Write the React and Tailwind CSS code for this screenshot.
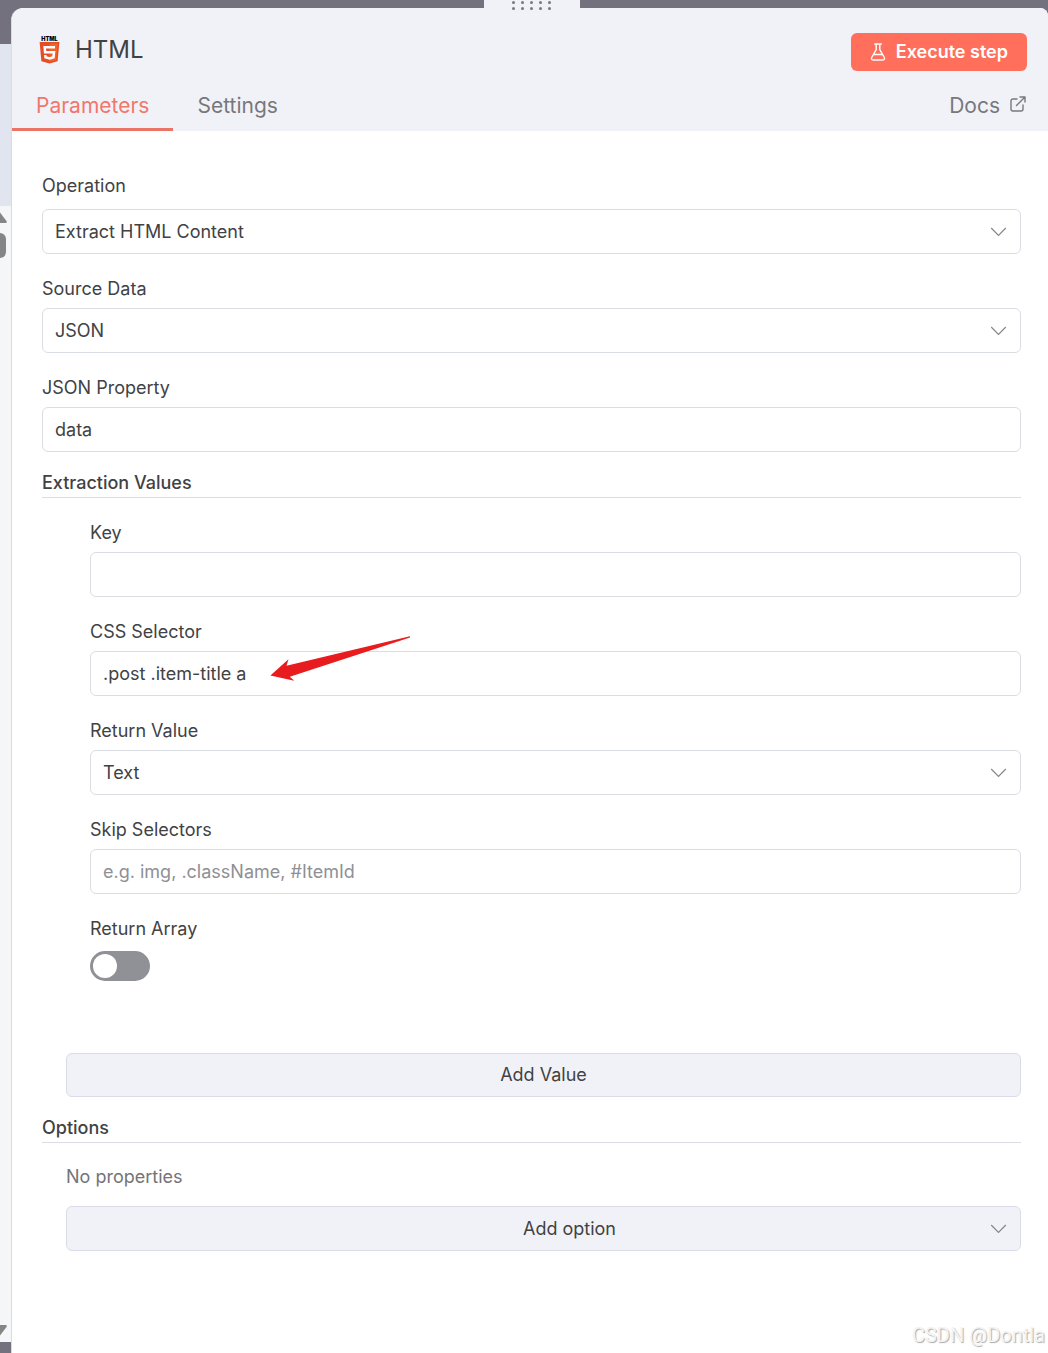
import React, { useId, useState } from 'react';

const inputClass =
  'block w-full h-[45px] rounded-md border border-[#dadde2] bg-white px-3 text-lg text-[#414244] placeholder:text-[#8f9095] outline-none focus:border-[#ff6f5c]';

function Html5Logo() {
  return (
    <svg className="w-[21px] h-7 shrink-0" viewBox="0 0 21 28" aria-hidden="true">
      <text x="10.5" y="4.6" textAnchor="middle" fontFamily="Inter, sans-serif" fontSize="5.6" fontWeight="900" fill="#000">
        HTML
      </text>
      <path d="M0.6 6h19.8l-1.8 19.2-8.1 2.4-8.1-2.4z" fill="#e44d26" />
      <path d="M10.5 7.6h8.2l-1.5 16.5-6.7 1.9z" fill="#f16529" />
      <path d="M16 11.3H5.7l0.4 5h8.9l-0.5 4.9-4 1.2-4-1.2-0.2-2.2" fill="none" stroke="#fff" strokeWidth="2.5" />
    </svg>
  );
}

function FlaskIcon() {
  return (
    <svg className="w-4 h-[18px]" viewBox="0 0 16 18" fill="none" stroke="currentColor" strokeWidth="1.4" strokeLinecap="round" strokeLinejoin="round" aria-hidden="true">
      <path d="M4.7 1h6.6M6.2 1v5.6L1.7 14.5c-0.7 1.3 0 2.5 1.4 2.5h9.8c1.4 0 2.1-1.2 1.4-2.5L9.8 6.6V1M4.3 11.5h7.4" />
    </svg>
  );
}

function ExternalIcon() {
  return (
    <svg className="w-4 h-4" viewBox="0 0 16 16" fill="none" stroke="currentColor" strokeWidth="1.4" strokeLinecap="round" strokeLinejoin="round" aria-hidden="true">
      <path d="M7 3H3a2 2 0 0 0-2 2v8a2 2 0 0 0 2 2h8a2 2 0 0 0 2-2V9M10 1h5v5M15 1L6.5 9.5" />
    </svg>
  );
}

function Chevron() {
  return (
    <svg className="absolute right-3.5 top-[18px] w-4 h-2.5 pointer-events-none" viewBox="0 0 16 10" fill="none" stroke="#85868a" strokeWidth="1.2" aria-hidden="true">
      <path d="M0.2 1L7.5 8.4 14.8 1" />
    </svg>
  );
}

function RedArrow() {
  return (
    <svg className="absolute left-[180px] -top-[15px] w-[141px] h-[46px] pointer-events-none" viewBox="0 0 141 46" aria-hidden="true">
      <path d="M0.4 39.6L18.5 23.3 16.5 29.7 140 0.2V1.4L19.8 40.7 24.3 44.8z" fill="#e81c1e" />
    </svg>
  );
}

function Field({ label, id, children, className = 'mt-[21px] gap-1.5' }) {
  return (
    <div className={`flex flex-col ${className}`}>
      <label htmlFor={id} className="leading-[27px]">{label}</label>
      <div className="relative">{children}</div>
    </div>
  );
}

function TextField({ label, value, placeholder, children }) {
  const id = useId();
  return (
    <Field label={label} id={id}>
      <input id={id} type="text" defaultValue={value} placeholder={placeholder} className={inputClass} />
      {children}
    </Field>
  );
}

function SelectField({ label, options, className }) {
  const id = useId();
  return (
    <Field label={label} id={id} className={className}>
      <select id={id} className={`${inputClass} appearance-none`}>
        {options.map((o) => (
          <option key={o}>{o}</option>
        ))}
      </select>
      <Chevron />
    </Field>
  );
}

function SectionTitle({ children }) {
  return (
    <h2 className="mt-[17px] h-[29px] border-b border-[#dadde2] text-lg leading-[27px] font-medium">{children}</h2>
  );
}

// Slice of the canvas that stays visible beside the panel
function CanvasEdge() {
  return (
    <div className="w-[11px] shrink-0 flex flex-col" aria-hidden="true">
      <div className="h-11" />
      <div className="h-[162px] bg-[#e1e5f0]" />
      <div className="flex-1 flex flex-col bg-[#f5f6f7] pt-1.5">
        <svg className="w-[7px] h-[11px]" viewBox="0 0 7 11">
          <path d="M0 0.5L6.8 9.5Q7 11 5.5 11H0z" fill="#858585" />
        </svg>
        <div className="mt-2.5 w-1.5 h-[25px] rounded-r-md bg-[#858585]" />
        <svg className="mt-auto mb-1.5 w-[7px] h-[11px]" viewBox="0 0 7 11">
          <path d="M0 0h5.5Q7.5 0 6.5 2L0 10.5z" fill="#858585" />
        </svg>
      </div>
      <div className="h-[11px]" />
    </div>
  );
}

function DragHandle() {
  return (
    <div className="absolute -top-2 left-0 right-0 flex justify-center pl-1">
      <div className="w-24 h-4 bg-[#f1f2f8]">
        <svg className="w-24 h-3" viewBox="0 0 96 12" fill="#77787e" aria-hidden="true">
          {[29.5, 38.5, 47.5, 56.5, 65.5].map((x) => (
            <g key={x}>
              <circle cx={x} cy="2.5" r="1.5" />
              <circle cx={x} cy="8.5" r="1.5" />
            </g>
          ))}
        </svg>
      </div>
    </div>
  );
}

function Header() {
  return (
    <header className="bg-[#f1f2f8] rounded-tl-xl rounded-tr-lg">
      <div className="flex items-start justify-between pl-[27px] pr-[21px] pt-[25px]">
        <div className="flex items-center gap-[15px]">
          <Html5Logo />
          <h1 className="text-2xl leading-[34px]">HTML</h1>
        </div>
        <button type="button" className="flex items-center gap-2.5 h-[38px] px-[19px] rounded-md bg-[#ff6f5c] text-lg font-semibold text-white cursor-pointer">
          <FlaskIcon />
          Execute step
        </button>
      </div>
      <nav className="mt-2.5 flex h-[50px] text-[21px] text-[#77787c]">
        <a href="#parameters" className="px-6 pt-2 leading-[33px] border-b-3 border-[#ec7466] text-[#f0776a]">Parameters</a>
        <a href="#settings" className="px-6 pt-2 leading-[33px]">Settings</a>
        <a href="#docs" className="ml-auto mr-[22px] flex gap-2.5 pt-2 leading-[33px]">
          Docs
          <span className="pt-[7px]"><ExternalIcon /></span>
        </a>
      </nav>
    </header>
  );
}

export default function App() {
  const [returnArray, setReturnArray] = useState(false);

  return (
    <div className="min-h-screen flex bg-[#74717e] font-['Inter',sans-serif] text-lg text-[#414244]">
      <CanvasEdge />

      <main className="relative flex-1 min-w-0 mt-2 bg-white border-l border-[#d9dae6] rounded-tl-xl rounded-tr-lg">
        <Header />
        <DragHandle />

        <form className="pt-[41px] pb-24 pl-[30px] pr-[27px]" onSubmit={(e) => e.preventDefault()}>
          <SelectField label="Operation" options={['Extract HTML Content', 'Generate HTML Template', 'Convert to HTML Table']} className="gap-2.5" />
          <SelectField label="Source Data" options={['JSON', 'Binary']} />
          <TextField label="JSON Property" value="data" />

          <SectionTitle>Extraction Values</SectionTitle>
          <div className="pl-12">
            <TextField label="Key" />
            <TextField label="CSS Selector" value=".post .item-title a">
              <RedArrow />
            </TextField>
            <SelectField label="Return Value" options={['Text', 'HTML', 'Attribute', 'Value']} />
            <TextField label="Skip Selectors" placeholder="e.g. img, .className, #ItemId" />
            <div className="mt-[21px]">
              <label htmlFor="return-array" className="block mb-[9px] leading-[27px]">Return Array</label>
              <input
                id="return-array"
                type="checkbox"
                role="switch"
                checked={returnArray}
                onChange={(e) => setReturnArray(e.target.checked)}
                className="block appearance-none w-[60px] h-[30px] p-[3px] rounded-full bg-[#909196] checked:bg-[#ff6f5c] cursor-pointer before:block before:size-6 before:rounded-full before:bg-white checked:before:ml-[30px]"
              />
            </div>
          </div>
          <div className="mt-[72px] pl-6">
            <button type="button" className="block w-full h-11 rounded-md border border-[#d9dce8] bg-[#f1f2f8] cursor-pointer">
              Add Value
            </button>
          </div>

          <SectionTitle>Options</SectionTitle>
          <div className="pl-6">
            <p className="mt-5 leading-[27px] text-[#737478]">No properties</p>
            <div className="relative mt-4">
              <select aria-label="Add option" className="block w-full h-[45px] pl-[52px] rounded-md border border-[#d9dce8] bg-[#f1f2f8] appearance-none [text-align-last:center]">
                <option>Add option</option>
                <option>Trim Values</option>
                <option>Clean Up Text</option>
              </select>
              <Chevron />
            </div>
          </div>
        </form>

        <span className="absolute right-[3px] bottom-1 font-['Roboto',sans-serif] text-xl text-[#f4f4f4] [text-shadow:1px_1px_1px_#aaa]">
          CSDN @Dontla
        </span>
      </main>
    </div>
  );
}
